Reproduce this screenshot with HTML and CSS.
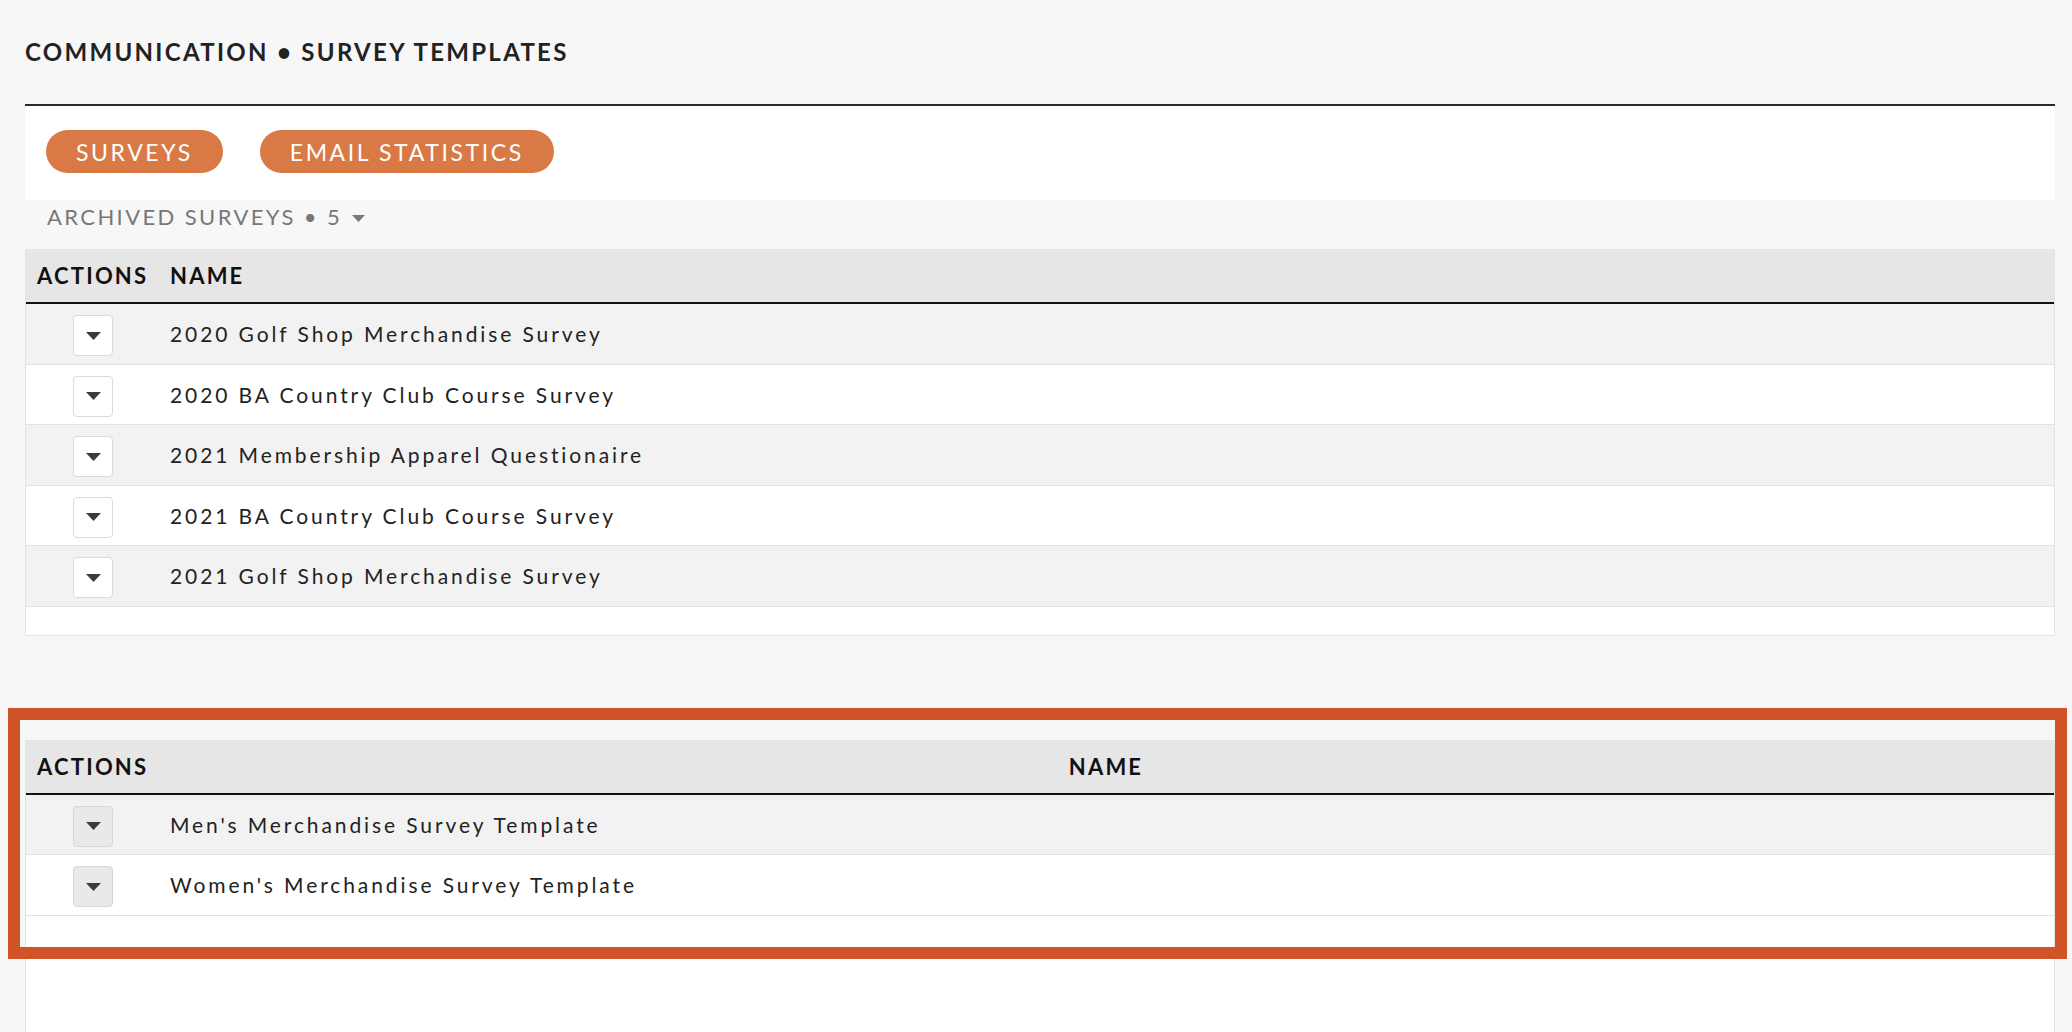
FILE: index.html
```html
<!DOCTYPE html>
<html lang="en">
<head>
    <meta charset="UTF-8">
    <meta name="viewport" content="width=device-width, initial-scale=1.0">
    <title>Communication - Survey Templates</title>
    <link rel="stylesheet" href="styles.css">
</head>
<body>
    <div class="page">
        <h1 class="page-title">Communication &bull; Survey Templates</h1>

        <div class="tabs">
            <button class="tab-btn">Surveys</button>
            <button class="tab-btn">Email Statistics</button>
        </div>

        <div class="archived">
            Archived Surveys &bull; 5
            <svg class="archived-caret" width="13" height="7" viewBox="0 0 13 7"><polygon points="0,0 13,0 6.5,7" fill="#7a7a7a"/></svg>
        </div>

        <div class="panel">
            <table class="grid">
                <thead>
                    <tr>
                        <th class="col-actions">Actions</th>
                        <th class="col-name">Name</th>
                    </tr>
                </thead>
                <tbody>
                    <tr>
                        <td class="cell-actions"><span class="action-btn"><svg width="15" height="8" viewBox="0 0 15 8"><polygon points="0,0 15,0 7.5,8" fill="#3b3b3b"/></svg></span></td>
                        <td class="cell-name">2020 Golf Shop Merchandise Survey</td>
                    </tr>
                    <tr>
                        <td class="cell-actions"><span class="action-btn"><svg width="15" height="8" viewBox="0 0 15 8"><polygon points="0,0 15,0 7.5,8" fill="#3b3b3b"/></svg></span></td>
                        <td class="cell-name">2020 BA Country Club Course Survey</td>
                    </tr>
                    <tr>
                        <td class="cell-actions"><span class="action-btn"><svg width="15" height="8" viewBox="0 0 15 8"><polygon points="0,0 15,0 7.5,8" fill="#3b3b3b"/></svg></span></td>
                        <td class="cell-name">2021 Membership Apparel Questionaire</td>
                    </tr>
                    <tr>
                        <td class="cell-actions"><span class="action-btn"><svg width="15" height="8" viewBox="0 0 15 8"><polygon points="0,0 15,0 7.5,8" fill="#3b3b3b"/></svg></span></td>
                        <td class="cell-name">2021 BA Country Club Course Survey</td>
                    </tr>
                    <tr>
                        <td class="cell-actions"><span class="action-btn"><svg width="15" height="8" viewBox="0 0 15 8"><polygon points="0,0 15,0 7.5,8" fill="#3b3b3b"/></svg></span></td>
                        <td class="cell-name">2021 Golf Shop Merchandise Survey</td>
                    </tr>
                    <tr class="row-spacer"><td colspan="2"></td></tr>
                </tbody>
            </table>
        </div>

        <div class="panel panel-templates">
            <table class="grid grid-templates">
                <thead>
                    <tr>
                        <th class="col-actions">Actions</th>
                        <th class="col-name">Name</th>
                    </tr>
                </thead>
                <tbody>
                    <tr>
                        <td class="cell-actions"><span class="action-btn action-btn-muted"><svg width="15" height="8" viewBox="0 0 15 8"><polygon points="0,0 15,0 7.5,8" fill="#3b3b3b"/></svg></span></td>
                        <td class="cell-name">Men's Merchandise Survey Template</td>
                    </tr>
                    <tr>
                        <td class="cell-actions"><span class="action-btn action-btn-muted"><svg width="15" height="8" viewBox="0 0 15 8"><polygon points="0,0 15,0 7.5,8" fill="#3b3b3b"/></svg></span></td>
                        <td class="cell-name">Women's Merchandise Survey Template</td>
                    </tr>
                </tbody>
            </table>
        </div>
    </div>

    <!-- highlight drawn over the templates table -->
    <div class="highlight"></div>
</body>
</html>
```

FILE: styles.css
```css
* {
    margin: 0;
    padding: 0;
    box-sizing: border-box;
}

html, body {
    height: 100%;
    overflow: hidden;
}

body {
    font-family: 'Lato', 'Liberation Sans', sans-serif;
    background: #f7f7f7;
    color: #222;
}

.page {
    min-height: 100vh;
    display: flex;
    flex-direction: column;
    padding: 0 17px 0 25px;
}

.page-title {
    padding-top: 37px;
    margin-bottom: 37px;
    font-size: 24px;
    line-height: 30px;
    font-weight: 700;
    letter-spacing: 2.3px;
    text-transform: uppercase;
    color: #222;
}

.tabs {
    display: flex;
    gap: 37px;
    background: #fff;
    border-top: 2px solid #2a2a2a;
    padding: 24px 21px 27px;
}

.tab-btn {
    height: 43px;
    padding: 0 30px;
    border: none;
    border-radius: 22px;
    background: #d97a46;
    color: #fff;
    font-family: inherit;
    font-size: 23px;
    letter-spacing: 2.6px;
    text-transform: uppercase;
    cursor: pointer;
}

.archived {
    padding: 0 0 16px 22px;
    font-size: 22px;
    line-height: 33px;
    letter-spacing: 2.4px;
    text-transform: uppercase;
    color: #777;
}

.archived-caret {
    margin-left: 2px;
    vertical-align: 3px;
}

.panel {
    background: #fff;
    border: 1px solid #e3e3e3;
    border-top: none;
}

.panel-templates {
    flex: 1;
    margin-top: 104px;
    border-bottom: none;
}

.grid {
    width: 100%;
    table-layout: fixed;
    border-collapse: separate;
    border-spacing: 0;
}

.grid th {
    background: #e6e6e6;
    border-bottom: 2px solid #111;
    padding: 0 12px;
    line-height: 53px;
    font-size: 22px;
    font-weight: 700;
    letter-spacing: 2.2px;
    text-transform: uppercase;
    color: #111;
    text-align: left;
}

.grid th.col-actions {
    width: 132px;
    padding-left: 11px;
}

.grid-templates th.col-name {
    text-align: center;
}

.grid td {
    padding: 0;
    line-height: 59.5px;
    border-bottom: 1px solid #e2e2e2;
    vertical-align: middle;
}

.grid tbody tr:nth-child(odd) td {
    background: #f2f2f2;
}

.grid tbody tr:nth-child(even) td {
    background: #fff;
}

.cell-actions {
    padding-left: 47px !important;
}

.cell-name {
    padding-left: 12px !important;
    font-size: 21px;
    letter-spacing: 2.9px;
    color: #222;
}

.action-btn {
    display: inline-flex;
    align-items: center;
    justify-content: center;
    width: 40px;
    height: 41px;
    vertical-align: middle;
    background: #fff;
    border: 1px solid #dadada;
    border-radius: 4px;
}

.action-btn-muted {
    background: #e8e9eb;
    border-color: #d6d6d6;
}

.grid tbody tr.row-spacer td {
    height: 28px;
    line-height: 28px;
    background: #fff;
    border-bottom: none;
}

.highlight {
    position: absolute;
    left: 8px;
    top: 708px;
    width: 2059px;
    height: 251px;
    border: 12px solid #d05427;
    pointer-events: none;
}
```
